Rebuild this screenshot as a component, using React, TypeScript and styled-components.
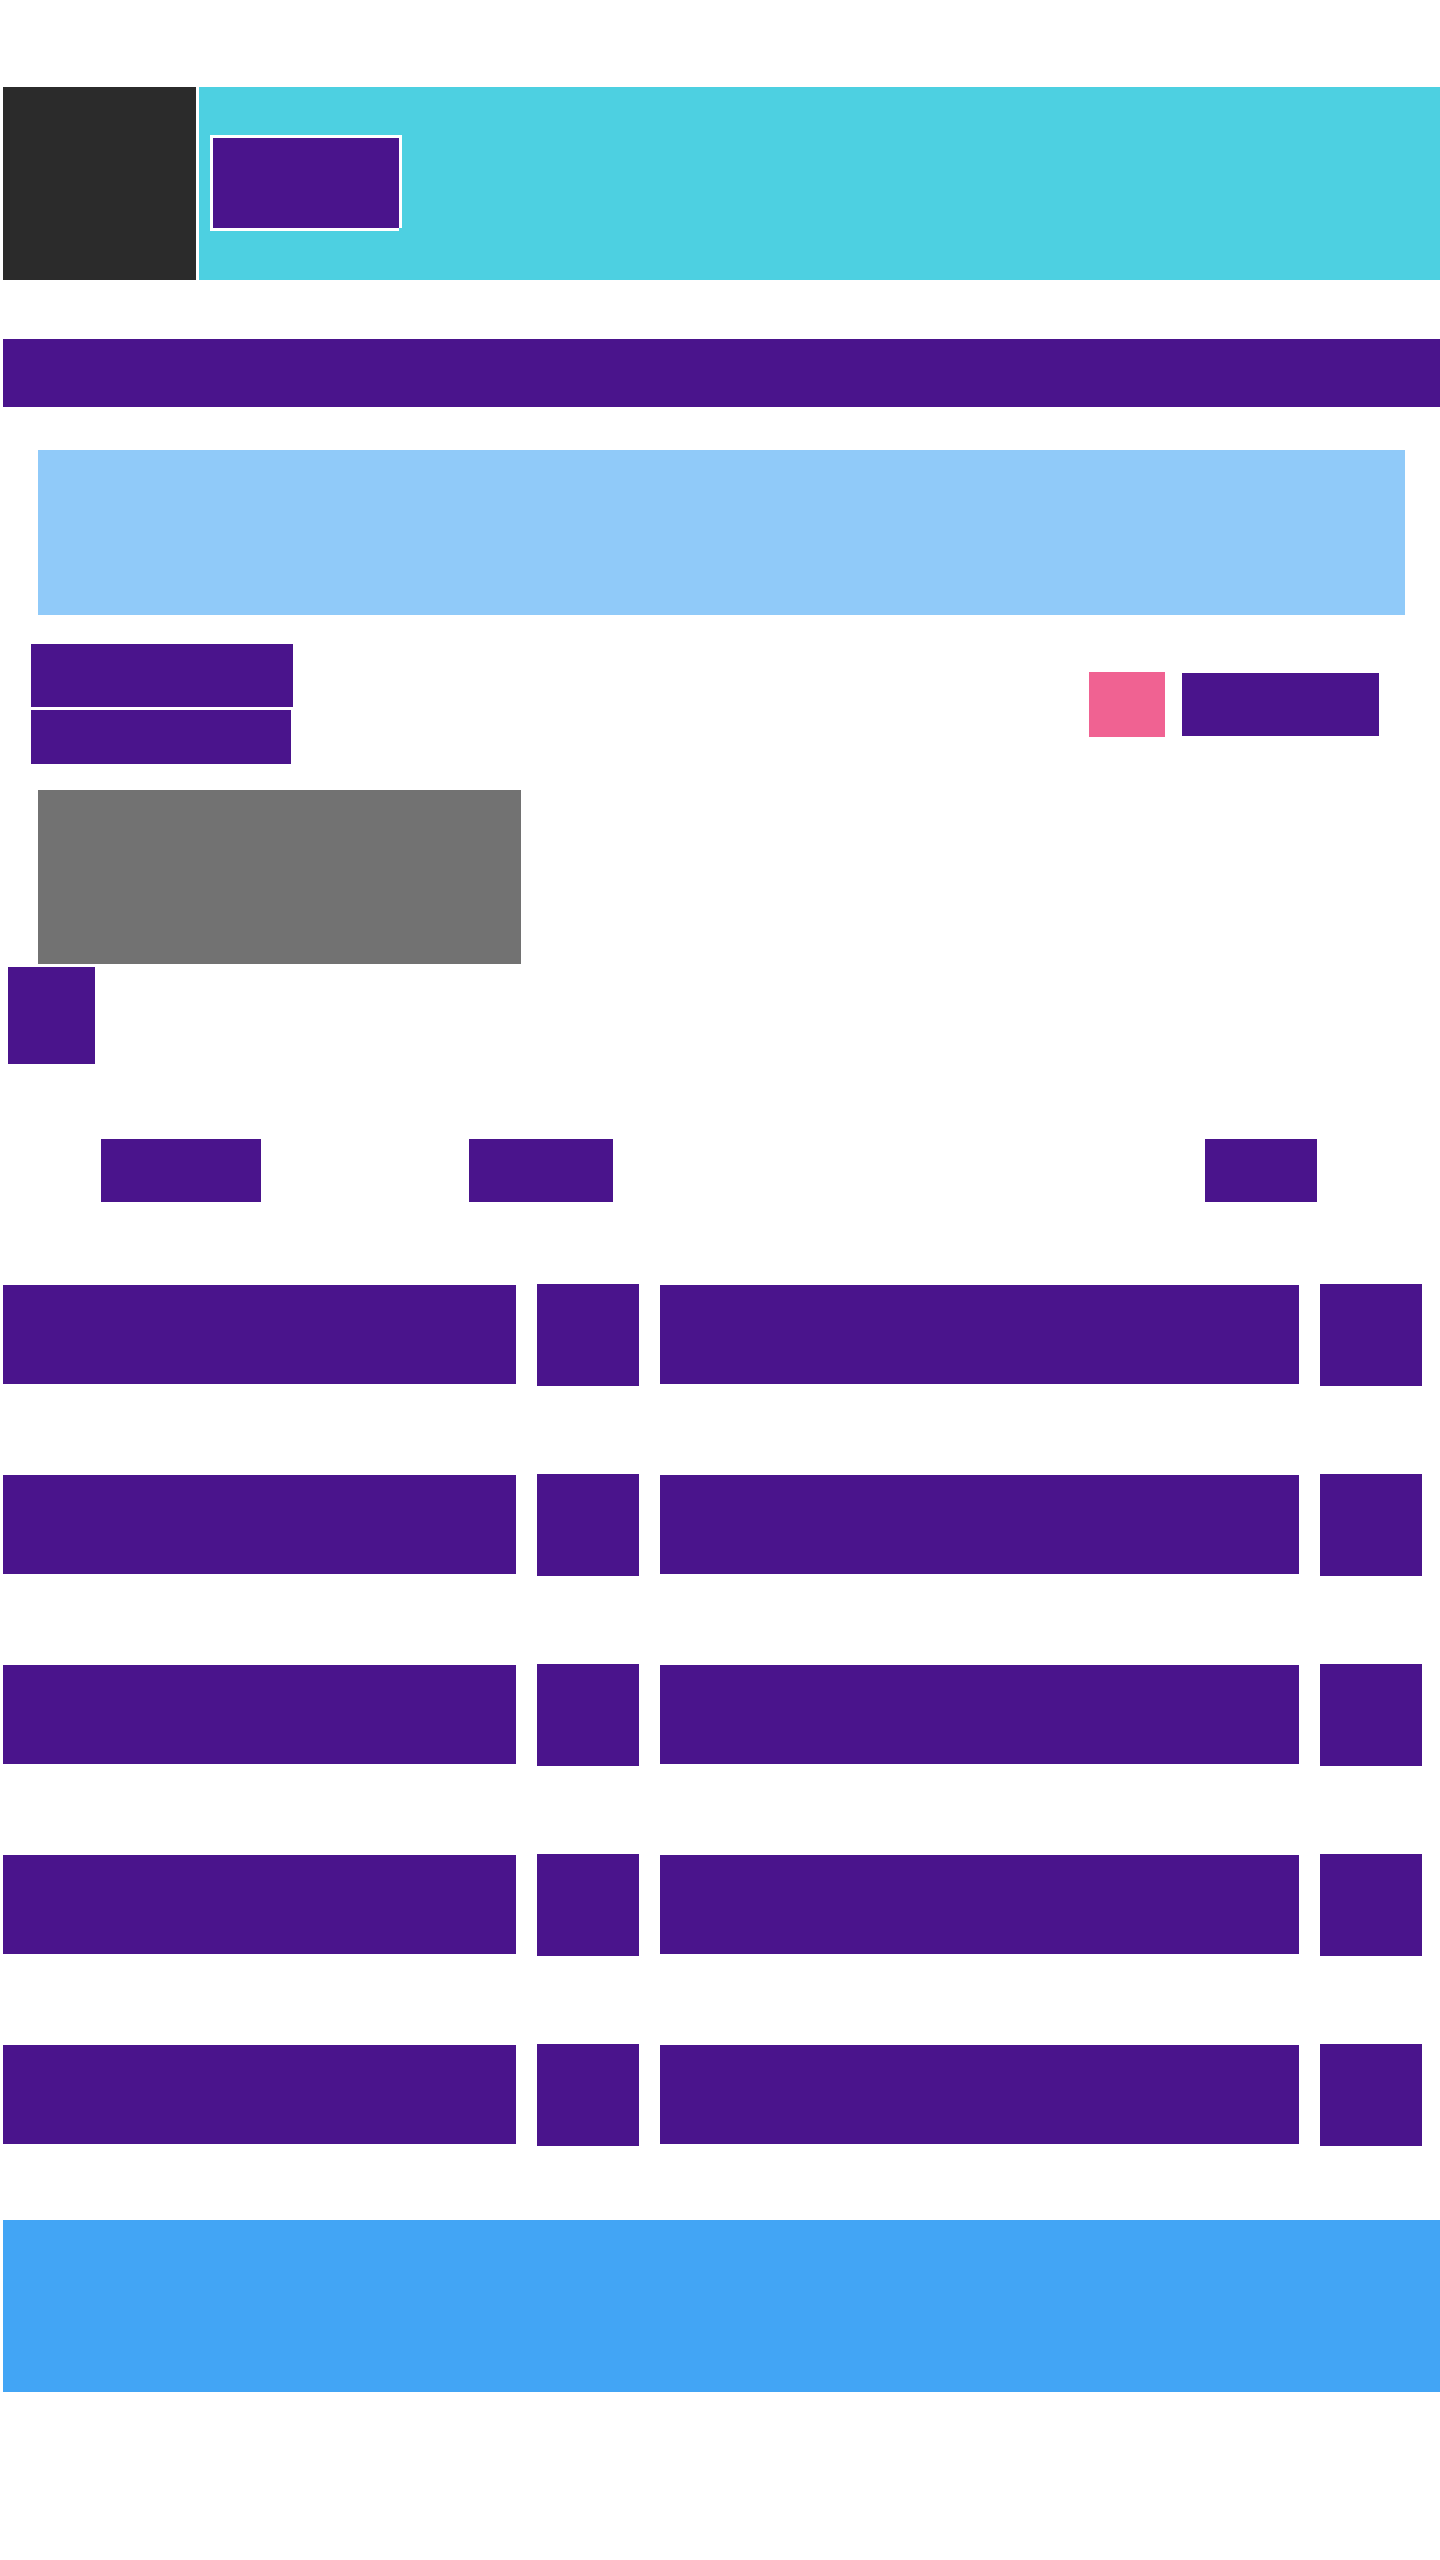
import React from "react";
import styled, { createGlobalStyle } from "styled-components";

const PURPLE = "#4a148c";

const GlobalStyle = createGlobalStyle`
  html, body {
    margin: 0;
    padding: 0;
    background: #ffffff;
    font-family: "Liberation Sans", Arial, sans-serif;
  }
`;

const Page = styled.div`
  width: 1440px;
  box-sizing: border-box;
  padding: 87px 0 168px 3px;
  display: flex;
  flex-direction: column;
`;

const Header = styled.header`
  display: flex;
  gap: 3px;
  height: 193px;
`;

const Logo = styled.div`
  width: 193px;
  flex-shrink: 0;
  background: #2b2b2b;
`;

const Hero = styled.div`
  flex: 1;
  background: #4dd0e1;
  padding: 51px 0 0 14px;
`;

const HeroButton = styled.button`
  display: block;
  width: 186px;
  height: 90px;
  border: none;
  background: ${PURPLE};
  padding: 0;
  box-shadow: -3px -3px 0 0 #ffffff, 3px -3px 0 0 #ffffff,
    -3px 3px 0 0 #ffffff, 3px 0 0 0 #ffffff, 0 3px 0 0 #ffffff;
`;

const NavBar = styled.nav`
  margin-top: 59px;
  height: 68px;
  background: ${PURPLE};
`;

const Banner = styled.section`
  margin: 43px 35px 0 35px;
  height: 165px;
  background: #90caf9;
`;

const InfoRow = styled.div`
  margin-top: 29px;
  display: flex;
  align-items: center;
  justify-content: space-between;
  padding: 0 61px 0 28px;
`;

const TitleStack = styled.div`
  display: flex;
  flex-direction: column;
  gap: 3px;
`;

const Block = styled.div<{ $w: number; $h: number; $bg?: string; $top?: number }>`
  width: ${(p) => p.$w}px;
  height: ${(p) => p.$h}px;
  margin-top: ${(p) => p.$top ?? 0}px;
  flex-shrink: 0;
  background: ${(p) => p.$bg ?? PURPLE};
`;

const Actions = styled.div`
  display: flex;
  align-items: center;
  gap: 17px;
`;

const Media = styled.div`
  margin: 26px 0 0 35px;
  width: 483px;
  height: 174px;
  background: #727272;
`;

const Avatar = styled.div`
  margin: 3px 0 0 5px;
  width: 87px;
  height: 97px;
  background: ${PURPLE};
`;

const Tabs = styled.div`
  margin-top: 75px;
  display: flex;
  height: 63px;
`;

const Tab = styled.div<{ $w: number; $offset: number }>`
  width: ${(p) => p.$w}px;
  margin-left: ${(p) => p.$offset}px;
  background: ${PURPLE};
`;

const List = styled.div`
  margin-top: 82px;
  display: flex;
  flex-direction: column;
  gap: 88px;
`;

const Row = styled.div`
  display: flex;
  align-items: flex-start;
  gap: 21px;
  height: 102px;
`;

const Footer = styled.footer`
  margin-top: 74px;
  height: 172px;
  background: #42a5f5;
`;

const rows = [0, 1, 2, 3, 4];

export default function App() {
  return (
    <>
      <GlobalStyle />
      <Page>
        <Header>
          <Logo />
          <Hero>
            <HeroButton aria-label="hero" />
          </Hero>
        </Header>
        <NavBar />
        <Banner />
        <InfoRow>
          <TitleStack>
            <Block $w={262} $h={63} />
            <Block $w={260} $h={54} />
          </TitleStack>
          <Actions>
            <Block $w={76} $h={65} $bg="#f06292" />
            <Block $w={197} $h={63} />
          </Actions>
        </InfoRow>
        <Media />
        <Avatar />
        <Tabs>
          <Tab $w={160} $offset={98} />
          <Tab $w={144} $offset={208} />
          <Tab $w={112} $offset={592} />
        </Tabs>
        <List>
          {rows.map((r) => (
            <Row key={r}>
              <Block $w={513} $h={99} $top={1} />
              <Block $w={102} $h={102} />
              <Block $w={639} $h={99} $top={1} />
              <Block $w={102} $h={102} />
            </Row>
          ))}
        </List>
        <Footer />
      </Page>
    </>
  );
}
